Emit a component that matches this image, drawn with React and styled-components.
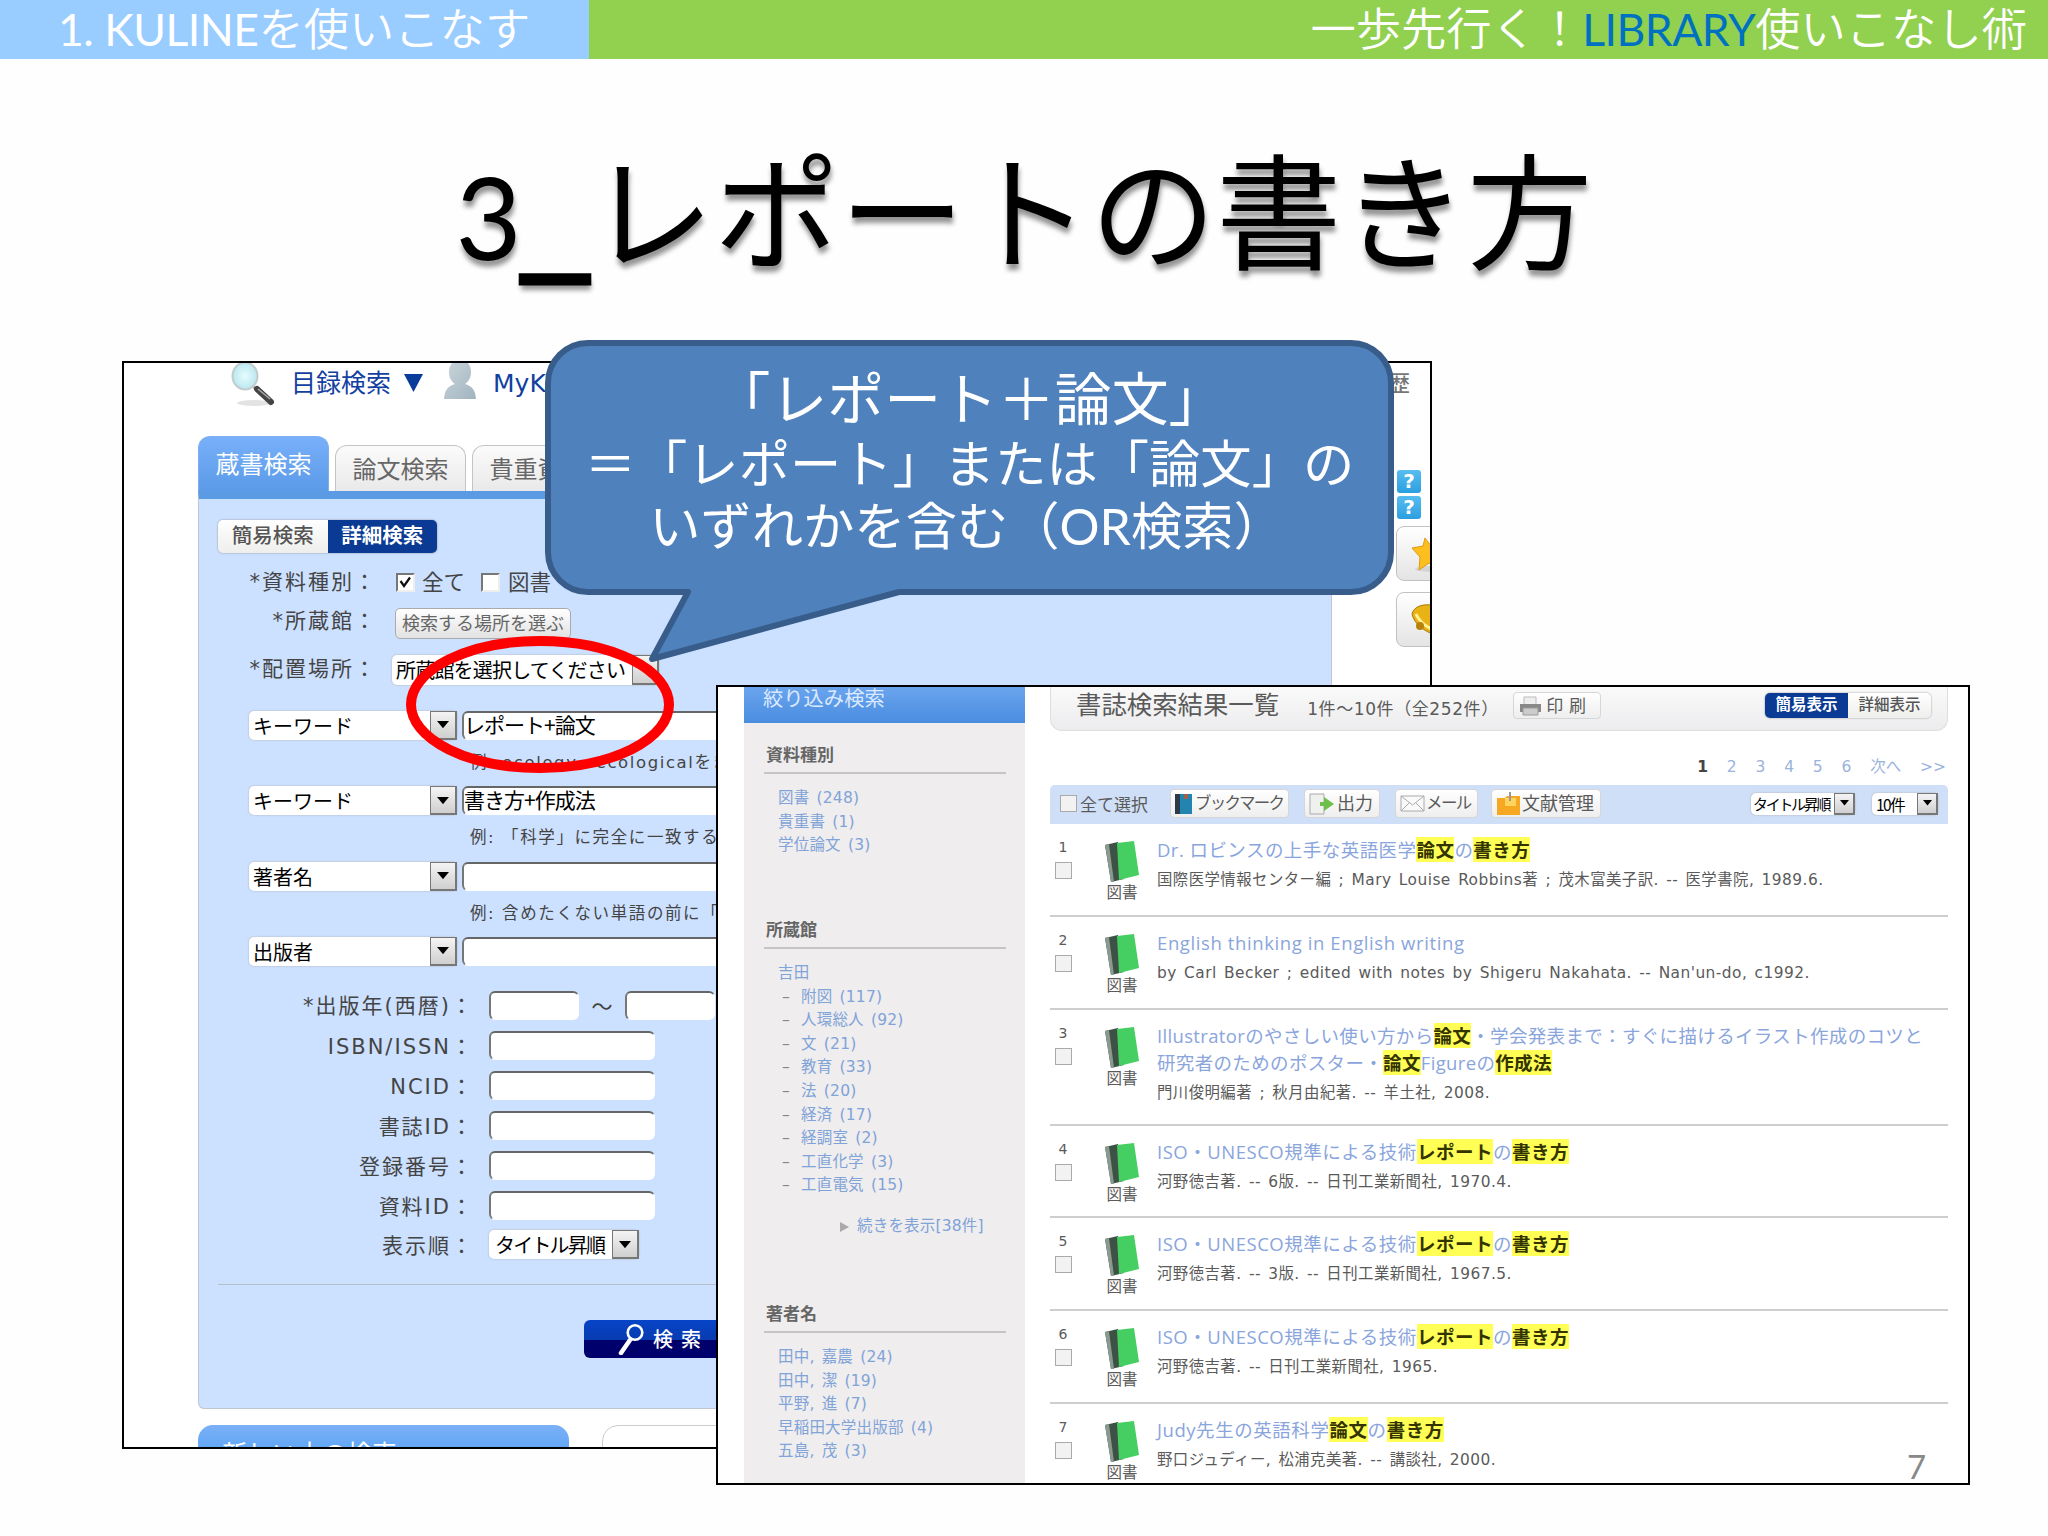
import React from "react";
import styled, { createGlobalStyle, css } from "styled-components";

const GlobalStyle = createGlobalStyle`
  *, *::before, *::after { box-sizing: border-box; }
  body { margin: 0; background: #fdfdfd; }
`;

const jp = `"Noto Sans CJK JP", sans-serif`;
const slideFont = `Lato, ${jp}`;
const uiFont = `"Open Sans", ${jp}`;
const wideFont = `"DejaVu Sans", ${jp}`;

/* ---------- slide ---------- */
const Slide = styled.div`
  position: relative;
  width: 2048px;
  height: 1536px;
  overflow: hidden;
  background: #fefefe;
  font-family: ${slideFont};
`;
const Header = styled.header`
  display: flex;
  height: 59px;
  color: #fff;
  font-size: 45.3px;
  line-height: 57px;
  font-weight: 350;
  white-space: nowrap;
`;
const Chapter = styled.div`
  width: 589px;
  padding-left: 58px;
  background: #99ccff;
`;
const Series = styled.div`
  flex: 1;
  padding-right: 21px;
  text-align: right;
  background: #92d050;
`;
const Latin = styled.span`
  font-weight: 400;
  font-size: ${(p) => p.$size || "44.5px"};
  letter-spacing: ${(p) => p.$ls || "-0.5px"};
  color: ${(p) => p.$color || "inherit"};
`;
const Title = styled.h1`
  margin: 0;
  height: 302px;
  padding-top: 63px;
  text-align: center;
  font-size: 125.500px;
  line-height: 180px;
  font-weight: 400;
  color: #000;
  text-shadow: 1px 6px 5px rgba(0, 0, 0, 0.42);
  white-space: nowrap;
`;
const Underscore = styled.span`
  font-family: "DejaVu Sans", sans-serif;
  font-size: 134px;
  line-height: 1px;
  vertical-align: 8px;
  -webkit-text-stroke: 3px #000;
`;
const PageNumber = styled.div`
  position: absolute;
  left: 1907px;
  top: 1446px;
  font-size: 33px;
  line-height: 40px;
  color: #898989;
`;

/* ---------- pasted windows ---------- */
const Shot = styled.section`
  position: absolute;
  left: ${(p) => p.$x}px;
  top: ${(p) => p.$y}px;
  width: ${(p) => p.$w}px;
  height: ${(p) => p.$h}px;
  border: 2px solid #000;
  background: #fff;
  overflow: hidden;
`;

/* search window */
const SearchShot = styled(Shot)`
  display: flex;
  font-family: ${wideFont};
  color: #444;
  white-space: nowrap;
`;
const SearchMain = styled.div`
  width: 1134px;
  margin-left: 74px;
  flex: none;
`;
const SideMenu = styled.aside`
  margin-left: 64px;
  width: 120px;
  flex: none;
`;
const TopNav = styled.nav`
  display: flex;
  align-items: center;
  height: 40px;
  padding-left: 32px;
  color: #12409f;
  font-size: 25px;
`;
const NavText = styled.span`
  margin: 0 ${(p) => p.$r}px 0 ${(p) => p.$l}px;
  padding-bottom: ${(p) => p.$b || 0}px;
`;
const Tabs = styled.div`
  display: flex;
  align-items: flex-end;
  gap: 6px;
  height: 55px;
  margin-top: 33px;
`;
const Tab = styled.div`
  width: 131px;
  height: ${(p) => (p.$active ? 55 : 46)}px;
  border: 1px solid #c4c4c4;
  border-bottom: 0;
  border-radius: 12px 12px 0 0;
  text-align: center;
  font-size: 24px;
  line-height: 49px;
  color: #666;
  background: linear-gradient(#fbfbfb, #e9e9ea);
  ${(p) =>
    p.$active &&
    css`
      line-height: 56px;
      color: #fff;
      border-color: #7fb0ee;
      background: linear-gradient(#78affa, #5b9be8);
    `}
`;
const Panel = styled.div`
  height: 918px;
  padding: 21px 17px 0 19px;
  border: 1px solid #bfc6cf;
  border-top: 8px solid #5b9be3;
  border-radius: 0 0 6px 6px;
  background: #cce0ff;
`;
const Toggle = styled.div`
  display: flex;
  width: ${(p) => p.$w}px;
  height: ${(p) => p.$h}px;
  border-radius: 5px;
  overflow: hidden;
  box-shadow: 0 0 2px #888;
  font-size: ${(p) => p.$size}px;
  line-height: ${(p) => p.$h - 1}px;
  text-align: center;
`;
const ToggleItem = styled.span`
  flex: 1;
  color: ${(p) => (p.$on ? "#fff" : "#555")};
  font-weight: ${(p) => (p.$on ? 700 : 500)};
  background: ${(p) => (p.$on ? "#0a3a94" : "linear-gradient(#fff, #eeeeec)")};
`;
const Row = styled.div`
  display: flex;
  align-items: center;
  height: ${(p) => p.$h}px;
  margin-top: ${(p) => p.$t || 0}px;
`;
const Label = styled.label`
  width: ${(p) => p.$w}px;
  flex: none;
  text-align: right;
  font-size: 21px;
  letter-spacing: 2px;
  padding-bottom: ${(p) => p.$b || 2}px;
  margin-right: ${(p) => p.$gap}px;
`;
const Check = styled.span`
  display: flex;
  align-items: center;
  justify-content: center;
  flex: none;
  width: ${(p) => p.$s || 19}px;
  height: ${(p) => p.$s || 19}px;
  margin-right: ${(p) => p.$gap || 0}px;
  background: ${(p) => (p.$soft ? "#f2f2f2" : "#fff")};
  border: ${(p) => (p.$soft ? "1.5px solid #aaa" : "2px solid #777")};
  border-right-color: ${(p) => (p.$soft ? "#aaa" : "#eee")};
  border-bottom-color: ${(p) => (p.$soft ? "#aaa" : "#eee")};
`;
const CheckText = styled.span`
  width: 59px;
  flex: none;
  padding-bottom: 3px;
  font-size: 21.500px;
`;
const PlaceButton = styled.span`
  width: 176px;
  height: 31px;
  border: 1px solid #aaa;
  border-radius: 5px;
  background: linear-gradient(#fff, #e2e2e2);
  font-size: 18px;
  line-height: 30px;
  text-align: center;
  color: #666;
`;
const SelectBox = styled.span`
  display: flex;
  align-items: center;
  justify-content: space-between;
  flex: none;
  width: ${(p) => p.$w}px;
  height: ${(p) => p.$h || 29}px;
  margin-right: ${(p) => p.$r || 0}px;
  padding-left: ${(p) => p.$pad || 4}px;
  border-radius: 5px;
  background: #fff;
  box-shadow: 0 0 2px #aaa;
  color: #000;
  font-family: ${jp};
  font-size: ${(p) => p.$size || 20}px;
  letter-spacing: ${(p) => p.$ls || 0}px;
  line-height: ${(p) => (p.$h || 29) - 2}px;
`;
const ArrowBox = styled.span`
  display: flex;
  align-items: center;
  justify-content: center;
  width: ${(p) => p.$w || 27}px;
  height: 100%;
  flex: none;
  border: 2px solid #777;
  border-width: 1px 2px 2px 1px;
  background: linear-gradient(#f4f4f4, #cfcfcf);
`;
const Field = styled.span`
  flex: none;
  width: ${(p) => p.$w}px;
  height: 29px;
  border: 1px solid transparent;
  border-top: 2px solid #666;
  border-left: 2px solid #777;
  border-radius: 6px;
  background: #fff;
  color: #000;
  font-family: ${jp};
  font-size: 21px;
  line-height: 23px;
  letter-spacing: ${(p) => p.$ls || 0}px;
`;
const Hint = styled.div`
  height: 46.3px;
  padding-left: 252px;
  font-size: 16.5px;
  line-height: 45px;
  letter-spacing: 1.6px;
`;
const Tilde = styled.span`
  width: 46px;
  text-align: center;
  font-family: ${jp};
  font-size: 21px;
`;
const Divider = styled.div`
  height: 1px;
  margin-top: ${(p) => p.$t}px;
  background: #b5bfca;
`;
const SearchButton = styled.div`
  display: flex;
  align-items: center;
  gap: 9px;
  width: 362px;
  height: 38px;
  margin: 35px 0 0 366px;
  padding-left: 34px;
  border-radius: 6px;
  color: #fff;
  font-size: 20px;
  font-weight: 500;
  letter-spacing: 8px;
  background: linear-gradient(#0644c8, #083cb0 52%, #00006c 53%, #00006c);
`;
const Lower = styled.div`
  display: flex;
  gap: 33px;
  margin-top: 16px;
`;
const LowerTitle = styled.div`
  width: 371px;
  height: 60px;
  padding: 13px 0 0 24px;
  border-radius: 15px 15px 0 0;
  background: linear-gradient(#7bb0f7, #65a8f6 20px);
  color: #fff;
  font-size: 25px;
  line-height: 34px;
`;
const LowerBox = styled.div`
  flex: 1;
  height: 60px;
  border: 1px solid #ccc;
  border-radius: 16px;
`;
const SideText = styled.div`
  height: 107px;
  margin-left: -8px;
  font-size: 22px;
  font-weight: 500;
  line-height: 42px;
  color: #777;
`;
const HelpBadge = styled.div`
  width: 24px;
  height: 23px;
  margin: 0 0 3px 1px;
  border-radius: 3px;
  background: linear-gradient(#58bdf0, #2b9fe0);
  color: #fff;
  font-size: 20px;
  font-weight: 700;
  line-height: 23px;
  text-align: center;
`;
const SideButtons = styled.div`
  display: grid;
  gap: 11px;
  padding-top: 4px;
`;
const SideButton = styled.div`
  width: 120px;
  height: 55px;
  padding: 9px 0 0 14px;
  border: 1px solid #c2c2c2;
  border-radius: 8px;
  background: linear-gradient(#fff, #e4e4e4);
`;

/* result window */
const ResultShot = styled(Shot)`
  display: flex;
  font-family: ${wideFont};
  color: #5a5a5a;
  white-space: nowrap;
`;
const Filter = styled.aside`
  width: 281px;
  flex: none;
  margin-left: 26px;
  background: #efedee;
`;
const FilterHead = styled.div`
  height: 36px;
  padding-left: 19px;
  background: linear-gradient(#6aa4ee, #4a8ddf);
  color: #dbeaff;
  font-size: 20.3px;
  line-height: 25px;
`;
const FilterGroup = styled.div`
  height: ${(p) => p.$h}px;
  padding: ${(p) => p.$t}px 19px 0 20px;
`;
const FilterName = styled.div`
  height: 32px;
  padding-left: 2px;
  border-bottom: 2px solid #c6c4c5;
  color: #666;
  font-size: 17px;
  font-weight: 700;
  line-height: 26px;
`;
const FilterList = styled.div`
  padding: 13px 0 0 14px;
  color: #80a3d8;
  font-size: 15.5px;
  line-height: 23.6px;
  letter-spacing: 0.2px;
  word-spacing: 2px;
`;
const SubItem = styled.div`
  padding-left: 4px;
  span { display: inline-block; width: 19px; color: #888; }
`;
const More = styled.div`
  display: flex;
  align-items: center;
  gap: 8px;
  margin-top: 17px;
  padding-left: 62px;
`;
const Results = styled.main`
  width: 898px;
  flex: none;
  margin-left: 25px;
`;
const ResultHead = styled.div`
  display: flex;
  align-items: center;
  height: 44px;
  padding: 0 16px 6px 25px;
  border: 1px solid #dedede;
  border-top: 0;
  border-radius: 0 0 12px 12px;
  background: linear-gradient(#fafafa, #ececee);
`;
const ResultTitle = styled.div`
  font-size: 25.4px;
  line-height: 34px;
  padding-bottom: 2px;
`;
const Count = styled.div`
  width: 206px;
  margin: 3px 0 0 28px;
  font-size: 17px;
  letter-spacing: 0.6px;
`;
const ToolButton = styled.div`
  display: flex;
  align-items: center;
  gap: ${(p) => p.$gap || 3}px;
  width: ${(p) => p.$w}px;
  height: ${(p) => p.$h || 29}px;
  margin-right: ${(p) => p.$r || 0}px;
  padding-left: 4px;
  flex: none;
  border: 1px solid #d4d6d8;
  border-radius: 4px;
  background: linear-gradient(#fff, #eee);
  font-size: ${(p) => p.$size || 18}px;
  letter-spacing: ${(p) => p.$ls || 0}px;
  line-height: 26px;
`;
const Pager = styled.div`
  display: flex;
  justify-content: flex-end;
  height: 54px;
  padding: 24px 2px 0 0;
  font-size: 15.500px;
  line-height: 24px;
  color: #9ab3dc;
  gap: 18.8px;
  b { color: #444; }
`;
const Toolbar = styled.div`
  display: flex;
  align-items: center;
  height: 39px;
  padding: 0 10px 2px 10px;
  border-radius: 5px 5px 0 0;
  background: #cfdff7;
`;
const AllText = styled.span`
  width: 90px;
  flex: none;
  margin-left: 3px;
  font-size: 17px;
`;
const Spring = styled.span`
  flex: 1;
`;
const Entry = styled.article`
  display: flex;
  height: ${(p) => p.$h}px;
  border-bottom: 2px solid #d0cdd0;
`;
const EntryNo = styled.div`
  display: flex;
  flex-direction: column;
  align-items: center;
  width: 26px;
  padding-top: 12px;
  font-size: 14px;
  line-height: 22px;
  gap: 4px;
`;
const EntryKind = styled.div`
  display: flex;
  flex-direction: column;
  align-items: center;
  width: 36px;
  margin: 0 17px 0 28px;
  padding-top: 17px;
  font-size: 15.5px;
  line-height: 20px;
`;
const EntryBody = styled.div`
  padding-top: 12px;
`;
const EntryTitle = styled.div`
  font-family: ${uiFont};
  font-size: 18.5px;
  line-height: 27px;
  color: #8aa5dc;
  letter-spacing: ${(p) => p.$ls}px;
`;
const Mark = styled.mark`
  background: #ffff55;
  color: #333300;
  font-weight: 700;
`;
const EntryMeta = styled.div`
  margin-top: 3px;
  font-size: 15.4px;
  line-height: 29px;
  letter-spacing: 0.45px;
  word-spacing: 2px;
`;

/* overlay */
const Overlay = styled.svg`
  position: absolute;
  left: 0;
  top: 0;
  pointer-events: none;
`;
const CalloutText = styled.div`
  position: absolute;
  left: 545px;
  top: 365px;
  width: 849px;
  text-align: center;
  color: #fff;
  font-weight: 400;
  white-space: nowrap;
`;
const CalloutLine = styled.div`
  font-size: ${(p) => p.$size || 51.3}px;
  line-height: ${(p) => p.$lh || 62}px;
  padding-right: ${(p) => p.$pr || 0}px;
`;

const Down = ({ w = 12 }) => (
  <svg width={w} height={w * 0.6} viewBox="0 0 10 6"><path d="M0 0h10L5 6z" fill="#000" /></svg>
);
const Lens = () => (
  <svg width="46" height="46" viewBox="0 0 46 46">
    <defs>
      <radialGradient id="lens"><stop offset="0" stopColor="#e8fbff" /><stop offset="1" stopColor="#b9e8ee" /></radialGradient>
    </defs>
    <ellipse cx="24" cy="43" rx="17" ry="3" fill="#e3e3e3" />
    <path d="M23 26l4 4" stroke="#aaa" strokeWidth="3" />
    <path d="M27 29l14 13" stroke="#444" strokeWidth="6" strokeLinecap="round" />
    <path d="M28 29l12 10" stroke="#aaa" strokeWidth="1.5" />
    <ellipse cx="15" cy="16" rx="12.500" ry="13.500" fill="url(#lens)" stroke="#c2ccce" strokeWidth="2" />
  </svg>
);
const Person = () => (
  <svg width="32" height="40" viewBox="0 0 32 40">
    <defs><linearGradient id="man" x2="1" y2="1"><stop offset="0" stopColor="#ccd6db" /><stop offset="1" stopColor="#9fb4c0" /></linearGradient></defs>
    <path d="M16 0c7 0 11 5 11 12 0 6-3 10-6 12 6 2 10 4 11 15H0c1-11 5-13 11-15-3-2-6-6-6-12C5 5 9 0 16 0z" fill="url(#man)" />
  </svg>
);
const Loupe = () => (
  <svg width="26" height="32" viewBox="0 0 26 32" fill="none" stroke="#fff">
    <circle cx="17" cy="9.5" r="7.3" strokeWidth="2.6" />
    <path d="M12 17L3 30" strokeWidth="4.5" strokeLinecap="round" />
  </svg>
);
const Star = () => (
  <svg width="36" height="36" viewBox="0 0 36 36">
    <ellipse cx="20" cy="33" rx="16" ry="3" fill="#d4d4d4" />
    <path d="M14 2l6 8 13-1-7 11 4 12-12-5-10 7 1-13-8-9 11-2z" fill="#fdbf1f" stroke="#e09a10" />
  </svg>
);
const Bell = () => (
  <svg width="36" height="36" viewBox="0 0 36 36">
    <path d="M1 12C3 4 12 2 21 3c8 2 12 14 12 26l-8 4C14 30 3 22 1 12z" fill="#e9b316" stroke="#a97909" />
    <path d="M5 12c3 7 10 13 20 17" stroke="#fff09a" strokeWidth="3" fill="none" />
    <circle cx="9" cy="24" r="4" fill="#b8820a" />
  </svg>
);
const Book = () => (
  <svg width="36" height="42" viewBox="0 0 36 42">
    <path d="M1 4l13-3 6 37-13 3z" fill="#3d5145" />
    <path d="M13 2l17-2 5 34-20 5z" fill="#45cf62" />
    <path d="M1 4l6 37h3L5 3z" fill="#8a9a90" />
  </svg>
);
const Printer = () => (
  <svg width="25" height="24" viewBox="0 0 25 24">
    <path d="M6 3h12v8H6z" fill="#eee" stroke="#bbb" />
    <path d="M2 10h21v8H2z" fill="#888" /><path d="M5 14h15v7H5z" fill="#ccc" stroke="#999" />
  </svg>
);
const BookmarkIcon = () => (
  <svg width="17" height="20" viewBox="0 0 17 20"><path d="M0 0h17v20H0z" fill="#2484b0" /><path d="M0 0h5v20H0z" fill="#2b3b4a" /><path d="M9 0h4v5H9z" fill="#a0604a" /></svg>
);
const ExportIcon = () => (
  <svg width="26" height="22" viewBox="0 0 26 22"><path d="M1 1h14v20H1z" fill="#eef1ee" stroke="#aaa" /><path d="M11 9h4V4l10 7-10 7v-5h-4z" fill="#6cc04a" /></svg>
);
const MailIcon = () => (
  <svg width="25" height="17" viewBox="0 0 25 17" fill="#fafafa" stroke="#aaa"><path d="M1 1h23v15H1z" /><path d="M1 1l11.500 9L24 1M1 16l8-8M24 16l-8-8" fill="none" /></svg>
);
const FolderIcon = () => (
  <svg width="25" height="24" viewBox="0 0 25 24"><path d="M1 6h8l2-2h13v19H1z" fill="#f6a823" /><path d="M9 6h11v8H9z" fill="#ffd35c" /><path d="M14 0v9" stroke="#999" strokeWidth="2" /></svg>
);

const conditions = [
  { name: "キーワード", value: "レポート+論文", hint: "例: ecology，ecologicalをまとめて検索" },
  { name: "キーワード", value: "書き方+作成法", hint: "例: 「科学」に完全に一致する" },
  { name: "著者名", value: "", hint: "例: 含めたくない単語の前に「-」" },
  { name: "出版者", value: "", hint: null },
];
const idFields = ["ISBN/ISSN", "NCID", "書誌ID", "登録番号", "資料ID"];

const libraries = ["附図 (117)", "人環総人 (92)", "文 (21)", "教育 (33)", "法 (20)", "経済 (17)", "経調室 (2)", "工直化学 (3)", "工直電気 (15)"];
const authors = ["田中, 嘉農 (24)", "田中, 潔 (19)", "平野, 進 (7)", "早稲田大学出版部 (4)", "五島, 茂 (3)"];

const iso = ["ISO・UNESCO規準による技術", ["レポート"], "の", ["書き方"]];
const entries = [
  { h: 93, ls: 0.45, lines: [["Dr. ロビンスの上手な英語医学", ["論文"], "の", ["書き方"]]], meta: "国際医学情報センター編 ; Mary Louise Robbins著 ; 茂木富美子訳. -- 医学書院, 1989.6." },
  { h: 93, ls: 0.6, lines: [["English thinking in English writing"]], meta: "by Carl Becker ; edited with notes by Shigeru Nakahata. -- Nan'un-do, c1992." },
  {
    h: 116,
    ls: 0.34,
    lines: [
      ["Illustratorのやさしい使い方から", ["論文"], "・学会発表まで：すぐに描けるイラスト作成のコツと"],
      ["研究者のためのポスター・", ["論文"], "Figureの", ["作成法"]],
    ],
    meta: "門川俊明編著 ; 秋月由紀著. -- 羊土社, 2008.",
  },
  { h: 92, ls: 0.52, lines: [iso], meta: "河野徳吉著. -- 6版. -- 日刊工業新聞社, 1970.4." },
  { h: 93, ls: 0.52, lines: [iso], meta: "河野徳吉著. -- 3版. -- 日刊工業新聞社, 1967.5." },
  { h: 93, ls: 0.52, lines: [iso], meta: "河野徳吉著. -- 日刊工業新聞社, 1965." },
  { h: 93, ls: 0.55, lines: [["Judy先生の英語科学", ["論文"], "の", ["書き方"]]], meta: "野口ジュディー, 松浦克美著. -- 講談社, 2000." },
];

function SearchWindow() {
  return (
    <SearchShot $x={122} $y={361} $w={1310} $h={1088}>
      <SearchMain>
        <TopNav>
          <Lens />
          <NavText $l={15} $r={13} $b={4}>目録検索</NavText>
          <svg width="19" height="18" viewBox="0 0 19 18"><path d="M0 0h19L9.500 18z" fill="#0a3c9c" /></svg>
          <NavText $l={21} $r={17}><Person /></NavText>
          <NavText $l={0} $r={0}>MyKULINE</NavText>
        </TopNav>
        <Tabs>
          <Tab $active>蔵書検索</Tab>
          <Tab>論文検索</Tab>
          <Tab>貴重資料</Tab>
        </Tabs>
        <Panel>
          <Toggle $w={219} $h={33} $size={20.5}>
            <ToggleItem>簡易検索</ToggleItem>
            <ToggleItem $on>詳細検索</ToggleItem>
          </Toggle>
          <Row $h={58}>
            <Label $w={159} $gap={19} $b={4}>*資料種別：</Label>
            <Check $gap={7}>
              <svg width="13" height="13" viewBox="0 0 13 13"><path d="M1.500 5l3.500 5L11 1.500" fill="none" stroke="#111" strokeWidth="2.200" /></svg>
            </Check>
            <CheckText>全て</CheckText>
            <Check $gap={8} />
            <CheckText>図書</CheckText>
          </Row>
          <Row $h={24}>
            <Label $w={159} $gap={18} $b={8}>*所蔵館：</Label>
            <PlaceButton>検索する場所を選ぶ</PlaceButton>
          </Row>
          <Row $h={70}>
            <Label $w={159} $gap={15} $b={6}>*配置場所：</Label>
            <SelectBox $w={267} $h={30} $ls={-0.8}>所蔵館を選択してください<ArrowBox /></SelectBox>
          </Row>
          {conditions.map((c, i) => (
            <React.Fragment key={i}>
              <Row $h={29} $t={i === 0 ? 6 : 0}>
                <Label $w={31} $gap={0} />
                <SelectBox $w={208} $r={5}>{c.name}<ArrowBox><Down /></ArrowBox></SelectBox>
                <Field $w={500} $ls={-1}>{c.value}</Field>
              </Row>
              {c.hint && <Hint>{c.hint}</Hint>}
            </React.Fragment>
          ))}
          <Row $h={41} $t={19}>
            <Label $w={256} $gap={15}>*出版年(西暦)：</Label>
            <Field $w={90} /><Tilde>～</Tilde><Field $w={90} />
          </Row>
          {idFields.map((f) => (
            <Row $h={40} key={f}>
              <Label $w={256} $gap={15}>{f}：</Label>
              <Field $w={166} />
            </Row>
          ))}
          <Row $h={38}>
            <Label $w={256} $gap={15}>表示順：</Label>
            <SelectBox $w={150} $pad={6} $ls={-1.8}>タイトル昇順<ArrowBox><Down /></ArrowBox></SelectBox>
          </Row>
          <Divider $t={20} />
          <SearchButton><Loupe />検索</SearchButton>
        </Panel>
        <Lower>
          <LowerTitle>新しい本の検索</LowerTitle>
          <LowerBox />
        </Lower>
      </SearchMain>
      <SideMenu>
        <SideText>歴</SideText>
        <HelpBadge>?</HelpBadge>
        <HelpBadge>?</HelpBadge>
        <SideButtons>
          <SideButton><Star /></SideButton>
          <SideButton><Bell /></SideButton>
        </SideButtons>
      </SideMenu>
    </SearchShot>
  );
}

function ResultWindow() {
  return (
    <ResultShot $x={716} $y={685} $w={1254} $h={800}>
      <Filter>
        <FilterHead>絞り込み検索</FilterHead>
        <FilterGroup $t={19} $h={175}>
          <FilterName>資料種別</FilterName>
          <FilterList><div>図書 (248)</div><div>貴重書 (1)</div><div>学位論文 (3)</div></FilterList>
        </FilterGroup>
        <FilterGroup $t={19} $h={384}>
          <FilterName>所蔵館</FilterName>
          <FilterList>
            <div>吉田</div>
            {libraries.map((l) => <SubItem key={l}><span>–</span>{l}</SubItem>)}
            <More>
              <svg width="9" height="10" viewBox="0 0 9 10"><path d="M0 0l9 5-9 5z" fill="#aaa" /></svg>
              続きを表示[38件]
            </More>
          </FilterList>
        </FilterGroup>
        <FilterGroup $t={19} $h={180}>
          <FilterName>著者名</FilterName>
          <FilterList>{authors.map((a) => <div key={a}>{a}</div>)}</FilterList>
        </FilterGroup>
      </Filter>
      <Results>
        <ResultHead>
          <ResultTitle>書誌検索結果一覧</ResultTitle>
          <Count>1件～10件（全252件）</Count>
          <ToolButton $w={88} $h={27} $size={17} $ls={6}><Printer />印刷</ToolButton>
          <Spring />
          <Toggle $w={166} $h={25} $size={15.5}>
            <ToggleItem $on>簡易表示</ToggleItem>
            <ToggleItem>詳細表示</ToggleItem>
          </Toggle>
        </ResultHead>
        <Pager><b>1</b><span>2</span><span>3</span><span>4</span><span>5</span><span>6</span><span>次へ</span><span>&gt;&gt;</span></Pager>
        <Toolbar>
          <Check $s={17} $soft />
          <AllText>全て選択</AllText>
          <ToolButton $w={119} $r={15} $size={16.5} $ls={-1.8}><BookmarkIcon />ブックマーク</ToolButton>
          <ToolButton $w={76} $r={15} $gap={2}><ExportIcon />出力</ToolButton>
          <ToolButton $w={83} $r={13} $size={16.5} $ls={-1.6} $gap={1}><MailIcon />メール</ToolButton>
          <ToolButton $w={110} $gap={1}><FolderIcon />文献管理</ToolButton>
          <Spring />
          <SelectBox $w={104} $h={22} $r={17} $pad={2} $size={15} $ls={-2.3}>タイトル昇順<ArrowBox $w={21}><Down w={9} /></ArrowBox></SelectBox>
          <SelectBox $w={66} $h={22} $size={15.5} $ls={-1.5}>10件<ArrowBox $w={21}><Down w={9} /></ArrowBox></SelectBox>
        </Toolbar>
        {entries.map((e, i) => (
          <Entry $h={e.h} key={i}>
            <EntryNo>{i + 1}<Check $s={17} $soft /></EntryNo>
            <EntryKind><Book />図書</EntryKind>
            <EntryBody>
              {e.lines.map((line, j) => (
                <EntryTitle key={j} $ls={e.ls}>
                  {line.map((part, k) => (Array.isArray(part) ? <Mark key={k}>{part[0]}</Mark> : part))}
                </EntryTitle>
              ))}
              <EntryMeta>{e.meta}</EntryMeta>
            </EntryBody>
          </Entry>
        ))}
      </Results>
    </ResultShot>
  );
}

export default function App() {
  return (
    <>
      <GlobalStyle />
      <Slide>
        <Header>
          <Chapter><Latin>1. KULINE</Latin>を使いこなす</Chapter>
          <Series>一歩先行く！<Latin $color="#0070c0">LIBRARY</Latin>使いこなし術</Series>
        </Header>
        <Title><Latin $size="114px" $ls="0">3</Latin><Underscore>_</Underscore>レポートの書き方</Title>
        <SearchWindow />
        <ResultWindow />
        <Overlay width="2048" height="1536" viewBox="0 0 2048 1536">
          <ellipse cx="540" cy="704.500" rx="129" ry="63.500" fill="none" stroke="#ff0000" strokeWidth="10" />
          <path
            d="M588 343H1351A40 40 0 0 1 1391 383V552A40 40 0 0 1 1351 592H899L652 659L688 592H588A40 40 0 0 1 548 552V383A40 40 0 0 1 588 343Z"
            fill="#4f81bd" stroke="#385d8a" strokeWidth="6" strokeLinejoin="round"
          />
        </Overlay>
        <CalloutText>
          <CalloutLine $size={56.9} $lh={67}>「レポート＋論文」</CalloutLine>
          <CalloutLine>＝「レポート」または「論文」の</CalloutLine>
          <CalloutLine $pr={5}>いずれかを含む（<Latin $size="50px" $ls="0">OR</Latin>検索）</CalloutLine>
        </CalloutText>
        <PageNumber>7</PageNumber>
      </Slide>
    </>
  );
}
